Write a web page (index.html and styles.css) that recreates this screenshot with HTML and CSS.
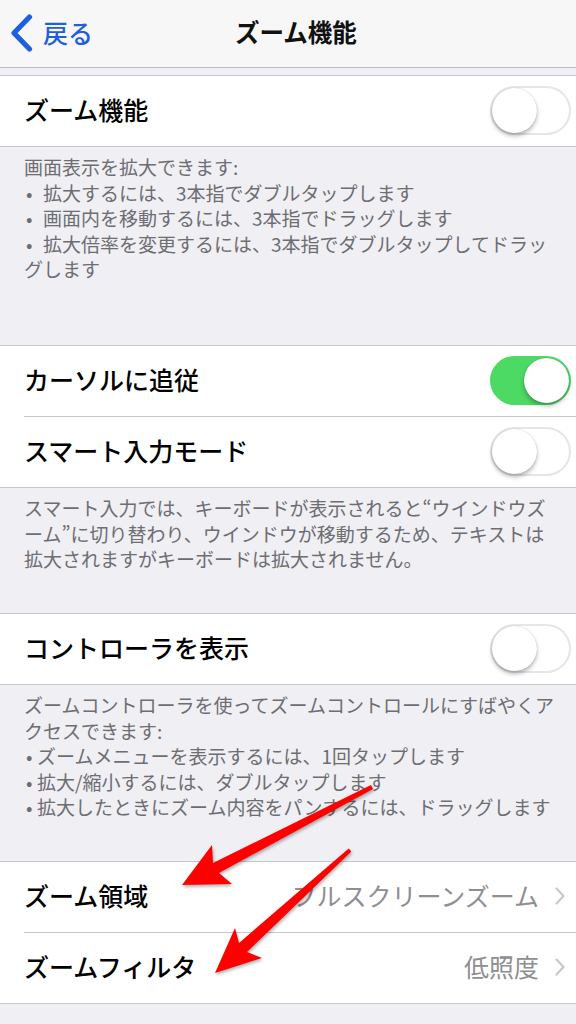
FILE: index.html
```html
<!DOCTYPE html>
<html lang="ja">
<head>
<meta charset="utf-8">
<link rel="stylesheet" href="styles.css">
</head>
<body>
<div class="page">
  <header class="nav">
    <div class="back">
      <svg class="back-chevron" width="26" height="38" viewBox="0 0 26 38"><path d="M20.5 3 L5 19 L20.5 35" fill="none" stroke="#1e5fe0" stroke-width="5.2" stroke-linecap="round" stroke-linejoin="round"/></svg>
      <span class="back-label">戻る</span>
    </div>
    <div class="title">ズーム機能</div>
    <div></div>
  </header>

  <section class="group first">
    <div class="row"><span class="label">ズーム機能</span><span class="switch off"><span class="knob"></span></span></div>
  </section>
  <div class="footer footer-tall">画面表示を拡大できます:<br><span class="bullet wide">•</span>拡大するには、3本指でダブルタップします<br><span class="bullet wide">•</span>画面内を移動するには、3本指でドラッグします<br><span class="bullet wide">•</span>拡大倍率を変更するには、3本指でダブルタップしてドラッ<br>グします</div>

  <section class="group">
    <div class="row"><span class="label">カーソルに追従</span><span class="switch on"><span class="knob"></span></span></div>
    <div class="sep"></div>
    <div class="row"><span class="label">スマート入力モード</span><span class="switch off"><span class="knob"></span></span></div>
  </section>
  <div class="footer">スマート入力では、キーボードが表示されると“ウインドウズ<br>ーム”に切り替わり、ウインドウが移動するため、テキストは<br>拡大されますがキーボードは拡大されません。</div>

  <section class="group">
    <div class="row"><span class="label">コントローラを表示</span><span class="switch off"><span class="knob"></span></span></div>
  </section>
  <div class="footer">ズームコントローラを使ってズームコントロールにすばやくア<br>クセスできます:<br><span class="bullet">•</span>ズームメニューを表示するには、1回タップします<br><span class="bullet">•</span>拡大/縮小するには、ダブルタップします<br><span class="bullet">•</span>拡大したときにズーム内容をパンするには、ドラッグします</div>

  <section class="group">
    <div class="row link"><span class="label">ズーム領域</span><span class="value">フルスクリーンズーム</span><svg class="chev" width="10" height="18" viewBox="0 0 10 18"><path d="M1.5 1.5 L8.5 9 L1.5 16.5" fill="none" stroke="#c7c7cc" stroke-width="2.2" stroke-linecap="round" stroke-linejoin="round"/></svg></div>
    <div class="sep"></div>
    <div class="row link"><span class="label">ズームフィルタ</span><span class="value">低照度</span><svg class="chev" width="10" height="18" viewBox="0 0 10 18"><path d="M1.5 1.5 L8.5 9 L1.5 16.5" fill="none" stroke="#c7c7cc" stroke-width="2.2" stroke-linecap="round" stroke-linejoin="round"/></svg></div>
  </section>

  <svg class="arrows" width="576" height="1024" viewBox="0 0 576 1024">
    <polygon points="371,785 213,863 212,845 182,885 232,884 219,873 373,789" fill="#ff0000"/>
    <polygon points="348.7,848.5 239,943 235,928 215,973 262,958 247,952 351.3,851.5" fill="#ff0000"/>
  </svg>
</div>
</body>
</html>
```

FILE: styles.css
```css
html, body {
  margin: 0;
  padding: 0;
}
body {
  background: #efeff4;
  font-family: "Noto Sans CJK JP", "Noto Sans", sans-serif;
  width: 576px;
  height: 1024px;
  overflow: hidden;
}
.page {
  position: relative;
  width: 576px;
  height: 1024px;
  display: flex;
  flex-direction: column;
}
.nav {
  height: 67px;
  background: #f7f7f8;
  border-bottom: 1px solid #bdbdc1;
  display: grid;
  grid-template-columns: 1fr auto 1fr;
  align-items: center;
  flex-shrink: 0;
}
.back {
  display: flex;
  align-items: center;
  padding-left: 9px;
  gap: 8px;
}
.back-chevron {
  display: block;
  margin-top: -2px;
}
.back-label {
  color: #1e5fe0;
  font-size: 25px;
  font-weight: 500;
  margin-top: -3px;
}
.title {
  font-size: 24.5px;
  font-weight: 700;
  color: #111;
  padding-left: 16px;
  margin-top: -4px;
}
.group {
  background: #fff;
  border-top: 1px solid #c8c7cc;
  border-bottom: 1px solid #c8c7cc;
  flex-shrink: 0;
}
.group.first {
  margin-top: 7px;
}
.row {
  height: 70px;
  box-sizing: border-box;
  display: flex;
  align-items: center;
  padding-left: 24px;
  padding-right: 5px;
  padding-bottom: 2px;
}
.row.link {
  padding-right: 11px;
}
.label {
  font-size: 25px;
  font-weight: 500;
  color: #000;
  flex: 1;
  white-space: nowrap;
  margin-top: -3px;
}
.sep {
  height: 1px;
  background: #c8c7cc;
  margin-left: 24px;
}
.value {
  font-size: 25px;
  color: #8e8e93;
  white-space: nowrap;
  margin-top: -3px;
}
.chev {
  display: block;
  margin-left: 16px;
}
.switch {
  position: relative;
  width: 81px;
  height: 49px;
  border-radius: 25px;
  box-sizing: border-box;
  flex-shrink: 0;
}
.switch.off {
  background: #fff;
  box-shadow: inset 0 0 0 2px #e5e5ea;
}
.switch.on {
  background: #4cd964;
}
.knob {
  position: absolute;
  top: 2px;
  width: 45px;
  height: 45px;
  border-radius: 50%;
  background: #fff;
  box-shadow: 0 3px 4px rgba(0,0,0,0.28), 0 0 1px rgba(0,0,0,0.25);
}
.switch.off .knob {
  left: 2px;
}
.switch.on .knob {
  right: 2px;
}
.footer {
  color: #6d6d72;
  font-size: 19px;
  line-height: 25.5px;
  padding: 7px 0 41.5px 24px;
  white-space: nowrap;
  flex-shrink: 0;
}
.footer.footer-tall {
  padding-bottom: 63.5px;
}
.bullet {
  display: inline-block;
  width: 13px;
  padding-left: 2px;
  box-sizing: border-box;
}
.bullet.wide {
  width: 19px;
}
.arrows {
  position: absolute;
  left: 0;
  top: 0;
  pointer-events: none;
  filter: drop-shadow(1px 2px 1.5px rgba(0,0,0,0.3));
}
```
